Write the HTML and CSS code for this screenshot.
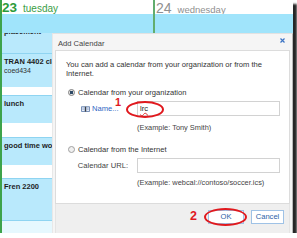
FILE: index.html
```html
<!DOCTYPE html>
<html>
<head>
<meta charset="utf-8">
<title>Add Calendar</title>
<link rel="stylesheet" href="styles.css">
</head>
<body>
<div class="shot">
  <div class="days">
    <div class="day day1">
      <div class="dayhead"><span class="num1">23</span><span class="dname1">tuesday</span></div>
      <div class="band"></div>
    </div>
    <div class="day day2">
      <div class="dayhead"><span class="num2">24</span><span class="dname2">wednesday</span></div>
      <div class="band"></div>
    </div>
  </div>
  <div class="main">
    <div class="col">
      <div class="cell cell-a"><div class="ev cut">placement</div></div>
      <div class="cell cell-b"><div class="ev">TRAN 4402 class</div><div class="sub">coed434</div></div>
      <div class="gap gap-1"></div>
      <div class="cell cell-c"><div class="ev">lunch</div></div>
      <div class="gap gap-2"></div>
      <div class="cell cell-d"><div class="ev">good time wonderful</div></div>
      <div class="gap gap-3"></div>
      <div class="cell cell-e"><div class="ev">Fren 2200</div></div>
      <div class="cell cell-f"></div>
    </div>
    <div class="dialog">
      <div class="dlg-head">
        <span class="title">Add Calendar</span>
        <svg class="close" width="5" height="5" viewBox="0 0 5 5"><path d="M0.5 0.5L4.5 4.5M4.5 0.5L0.5 4.5" stroke="#3c74c4" stroke-width="1.2" fill="none"/></svg>
      </div>
      <div class="panel">
        <p class="intro">You can add a calendar from your organization or from the<br>Internet.</p>
        <div class="form">
          <div class="opt opt-1"><span class="radio on"></span>Calendar from your organization</div>
          <div class="flabel name-label">
            <svg class="book" width="9" height="6" viewBox="0 0 9 6"><path d="M0.5 0.7H4V5.5H0.5Z M5 0.7H8.5V5.5H5Z" fill="#e9eef7" stroke="#5b78a8" stroke-width="0.8"/><path d="M4.5 0.5V5.8" stroke="#333" stroke-width="0.9"/><path d="M1.3 2H3.2M1.3 3.3H3.2M5.8 2H7.7M5.8 3.3H7.7" stroke="#7f97c0" stroke-width="0.6"/></svg>
            <span class="link">Name...</span>
          </div>
          <div class="input"><span class="typed">lrc</span></div>
          <div class="hint hint-1">(Example: Tony Smith)</div>
          <div class="opt opt-2"><span class="radio"></span>Calendar from the Internet</div>
          <div class="flabel url-label">Calendar URL:</div>
          <div class="input"></div>
          <div class="hint hint-2">(Example: webcal://contoso/soccer.ics)</div>
        </div>
      </div>
      <div class="footer">
        <button class="btn btn-ok">OK</button>
        <button class="btn btn-cancel">Cancel</button>
      </div>
    </div>
  </div>
  <span class="mark mark-1">1</span>
  <span class="ring ring-1"></span>
  <span class="mark mark-2">2</span>
  <span class="ring ring-2"></span>
</div>
</body>
</html>
```
FILE: styles.css
```css
* { box-sizing: border-box; margin: 0; padding: 0; }
body { margin: 0; background: #fff; font-family: "Liberation Sans", Arial, sans-serif; }

.shot {
  position: relative;
  width: 293px;
  height: 233px;
  background: #fff;
  box-shadow: 4px 4px 2px rgba(0,0,0,0.85);
  overflow: hidden;
  display: flex;
  flex-direction: column;
}

.days { display: flex; height: 33px; flex: none; }
.day { border-left: 2px solid #3ea34b; display: flex; flex-direction: column; }
.day1 { width: 153px; }
.day2 { flex: 1; border-left-color: #62ad6e; }
.dayhead {
  height: 14px;
  padding-top: 2px;
  line-height: 12px;
  display: flex;
  align-items: baseline;
  white-space: nowrap;
}
.num1 { font-size: 13.5px; font-weight: bold; color: #2c9b3a; margin-right: 6px; }
.dname1 { font-size: 10px; color: #3a9d45; }
.num2 { font-size: 14px; color: #8f8f8f; margin-left: 1px; margin-right: 6px; }
.dname2 { font-size: 9.5px; color: #8f8f8f; }
.band { flex: 1; background: #a0e4fb; }

.main { flex: 1; display: flex; min-height: 0; }

.col {
  width: 52px;
  flex: none;
  border-left: 2px solid #3ea34b;
  display: flex;
  flex-direction: column;
}
.cell {
  background: #b9e9fc;
  border-top: 1px solid #8fd4f1;
  padding: 3px 0 0 2px;
  overflow: hidden;
  white-space: nowrap;
  font-size: 7.5px;
  line-height: 9px;
  color: #1e1e1e;
  flex: none;
}
.gap { background: #fff; flex: none; }
.ev { font-weight: bold; }
.sub { font-size: 7px; color: #333; }
.cell-a { height: 20px; border-top: none; padding-top: 0; }
.cut { margin-top: -6.5px; }
.cell-b { height: 34px; }
.gap-1 { height: 8px; }
.cell-c { height: 28px; }
.gap-2 { height: 14px; }
.cell-d { height: 28px; }
.gap-3 { height: 13px; }
.cell-e { height: 42px; }
.cell-f { height: 13px; background: #e6f8fe; }

.dialog {
  flex: 1;
  background: #f5f5f5;
  border-left: 1px solid #e8e8e8;
  border-top: 1px solid #e2e2e2;
  border-right: 1px solid #b8b8b8;
  padding: 0 2px;
  display: flex;
  flex-direction: column;
  font-size: 7.6px;
  color: #333;
}
.dlg-head {
  height: 16px;
  flex: none;
  display: flex;
  justify-content: space-between;
  align-items: flex-start;
  padding: 4px 5px 0 3px;
}
.title { line-height: 9px; padding-top: 1px; color: #444; }
.close { display: block; }

.panel {
  flex: none;
  background: #fff;
  border: 1px solid #dcdcdc;
  padding: 9px 9px 15px 10px;
}
.intro { line-height: 9px; }

.form {
  display: grid;
  grid-template-columns: 67px 143px;
  column-gap: 4px;
}
.opt {
  grid-column: 1 / -1;
  height: 10px;
  display: flex;
  align-items: center;
  white-space: nowrap;
}
.opt-1 { margin-top: 9px; }
.opt-2 { margin-top: 11px; }
.radio {
  width: 7px;
  height: 7px;
  border-radius: 50%;
  border: 1px solid #a0a0a0;
  background: #f0f0f0;
  margin: 0 3px 0 2px;
  flex: none;
}
.radio.on {
  border-color: #7d7d7d;
  background: radial-gradient(circle, #2f4a66 0 1.5px, #e4e4e4 2px);
}
.flabel {
  height: 15px;
  display: flex;
  align-items: center;
  white-space: nowrap;
}
.name-label { margin-top: 4px; padding-left: 15px; gap: 2px; }
.url-label { margin-top: 4px; justify-content: flex-end; padding-right: 5px; color: #444; }
.book { display: block; flex: none; }
.link { color: #2e66c4; }
.input {
  height: 15px;
  margin-top: 4px;
  border: 1px solid #d2d2d2;
  background: #fff;
  padding-left: 2px;
  line-height: 13px;
}
.typed {
  color: #222;
  text-decoration: underline wavy #e03030;
  text-decoration-thickness: 1px;
}
.hint { grid-column: 2; line-height: 10px; white-space: nowrap; color: #444; font-size: 7.4px; }
.hint-1 { margin-top: 7px; }
.hint-2 { margin-top: 5px; }

.footer {
  flex: 1;
  display: flex;
  justify-content: flex-end;
  align-items: flex-start;
  gap: 7px;
  padding: 6px 5px 0 0;
  background: #efefef;
  border-left: 1px solid #e4e4e4;
  border-right: 1px solid #e4e4e4;
}
.btn {
  height: 14px;
  background: #fff;
  border: 1px solid #9fc2e6;
  color: #2d5fa8;
  font-family: inherit;
  font-size: 7.6px;
  line-height: 12px;
}
.btn-ok { width: 36px; }
.btn-cancel { width: 33px; }

.mark {
  position: absolute;
  color: #e0191e;
  font-weight: bold;
  line-height: 1;
}
.mark-1 { left: 115px; top: 97px; font-size: 11px; }
.mark-2 { left: 190px; top: 210px; font-size: 12.5px; }
.ring {
  position: absolute;
  border: 2px solid #e0191e;
  border-radius: 50%;
}
.ring-1 { left: 126px; top: 101px; width: 38px; height: 17px; }
.ring-2 { left: 204px; top: 208px; width: 43px; height: 18px; }
```
